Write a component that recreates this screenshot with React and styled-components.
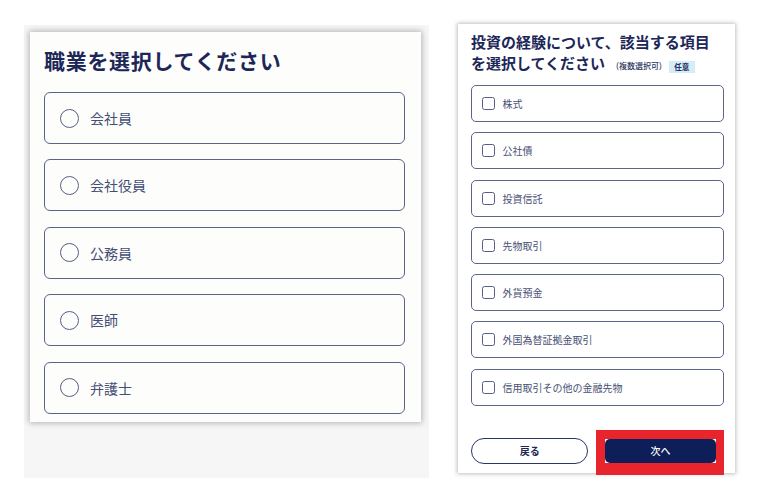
import React from "react";
import styled, { createGlobalStyle } from "styled-components";

const Global = createGlobalStyle`
  html, body { margin: 0; padding: 0; background: #ffffff; }
  body { font-family: "Noto Sans CJK JP", "Noto Sans", sans-serif; }
  * { box-sizing: border-box; }
`;

const Page = styled.div`
  display: flex;
  align-items: flex-start;
  gap: 29px;
  padding: 24px 0 0 24px;
  width: 763px;
  height: 495px;
`;

const LeftBackdrop = styled.div`
  margin-top: 1px;
  width: 405px;
  height: 453px;
  background: #f6f6f6;
  padding: 7px 0 0 6px;
`;

const LeftCard = styled.div`
  width: 391px;
  height: 390px;
  background: #fdfdfc;
  box-shadow: 0 0 6px 1px rgba(0, 0, 0, 0.28);
  padding: 13px 16px 0 14px;
  display: flex;
  flex-direction: column;
`;

const BigTitle = styled.h1`
  margin: 0 0 17px 0;
  font-size: 21px;
  line-height: 30px;
  font-weight: 700;
  color: #1c2758;
  letter-spacing: 0.7px;
`;

const OptionList = styled.div`
  display: flex;
  flex-direction: column;
  gap: ${(p) => p.$gap}px;
`;

const RadioOption = styled.label`
  height: 52px;
  border: 1.5px solid #5a6389;
  border-radius: 6px;
  display: flex;
  align-items: center;
  padding-left: 15px;
  gap: 11px;
  font-size: 14px;
  color: #454e74;
  background: #fdfdfc;
`;

const RadioCircle = styled.span`
  width: 19px;
  height: 19px;
  border: 1.6px solid #555e84;
  border-radius: 50%;
  flex: none;
`;

const RightCard = styled.div`
  width: 277px;
  height: 449px;
  background: #ffffff;
  box-shadow: 0 0 4px 1px rgba(0, 0, 0, 0.25);
  padding: 8px 11px 0 13px;
  display: flex;
  flex-direction: column;
`;

const SmallTitle = styled.h2`
  margin: 0 0 9px 0;
  font-size: 15px;
  line-height: 20.5px;
  font-weight: 700;
  color: #1c2758;
  white-space: nowrap;
`;

const Note = styled.span`
  font-size: 8px;
  font-weight: 500;
  color: #2a3360;
  margin-left: 11px;
`;

const Badge = styled.span`
  display: inline-block;
  font-size: 7.5px;
  line-height: 12.5px;
  font-weight: 700;
  color: #1f2b5c;
  background: #d5edf8;
  padding: 0 5.5px;
  margin-left: 7px;
  vertical-align: -1px;
`;

const CheckOption = styled.label`
  height: 37px;
  border: 1.2px solid #5d6589;
  border-radius: 5px;
  display: flex;
  align-items: center;
  padding-left: 10px;
  gap: 7.5px;
  font-size: 10px;
  color: #474f73;
`;

const CheckSquare = styled.span`
  width: 13px;
  height: 13px;
  border: 1.3px solid #555e84;
  border-radius: 2.5px;
  flex: none;
`;

const ButtonRow = styled.div`
  display: flex;
  align-items: flex-start;
  gap: 8px;
  margin-top: 24px;
`;

const BackButton = styled.button`
  margin-top: 8px;
  width: 119px;
  height: 26px;
  border: 1px solid #2b3566;
  border-radius: 13px;
  background: #ffffff;
  color: #1c2758;
  font-family: inherit;
  font-size: 10px;
  font-weight: 700;
  padding: 0;
`;

const Highlight = styled.div`
  width: 129px;
  height: 45px;
  background: #e8252d;
  padding: 9px 8px 12px 8.5px;
`;

const HighlightInner = styled.div`
  background: #ffffff;
  height: 100%;
`;

const NextButton = styled.button`
  display: block;
  width: 100%;
  height: 100%;
  border: none;
  border-radius: 5px;
  background: #0e1e58;
  color: #ffffff;
  font-family: inherit;
  font-size: 10px;
  font-weight: 500;
  padding: 0;
`;

const jobs = ["会社員", "会社役員", "公務員", "医師", "弁護士"];
const investments = [
  "株式",
  "公社債",
  "投資信託",
  "先物取引",
  "外貨預金",
  "外国為替証拠金取引",
  "信用取引その他の金融先物",
];

export default function App() {
  return (
    <>
      <Global />
      <Page>
        <LeftBackdrop>
          <LeftCard>
            <BigTitle>職業を選択してください</BigTitle>
            <OptionList $gap={15.4}>
              {jobs.map((j) => (
                <RadioOption key={j}>
                  <RadioCircle />
                  {j}
                </RadioOption>
              ))}
            </OptionList>
          </LeftCard>
        </LeftBackdrop>
        <RightCard>
          <SmallTitle>
            投資の経験について、該当する項目
            <br />
            を選択してください
            <Note>(複数選択可)</Note>
            <Badge>任意</Badge>
          </SmallTitle>
          <OptionList $gap={10.3}>
            {investments.map((i) => (
              <CheckOption key={i}>
                <CheckSquare />
                {i}
              </CheckOption>
            ))}
          </OptionList>
          <ButtonRow>
            <BackButton>戻る</BackButton>
            <Highlight>
              <HighlightInner>
                <NextButton>次へ</NextButton>
              </HighlightInner>
            </Highlight>
          </ButtonRow>
        </RightCard>
      </Page>
    </>
  );
}
